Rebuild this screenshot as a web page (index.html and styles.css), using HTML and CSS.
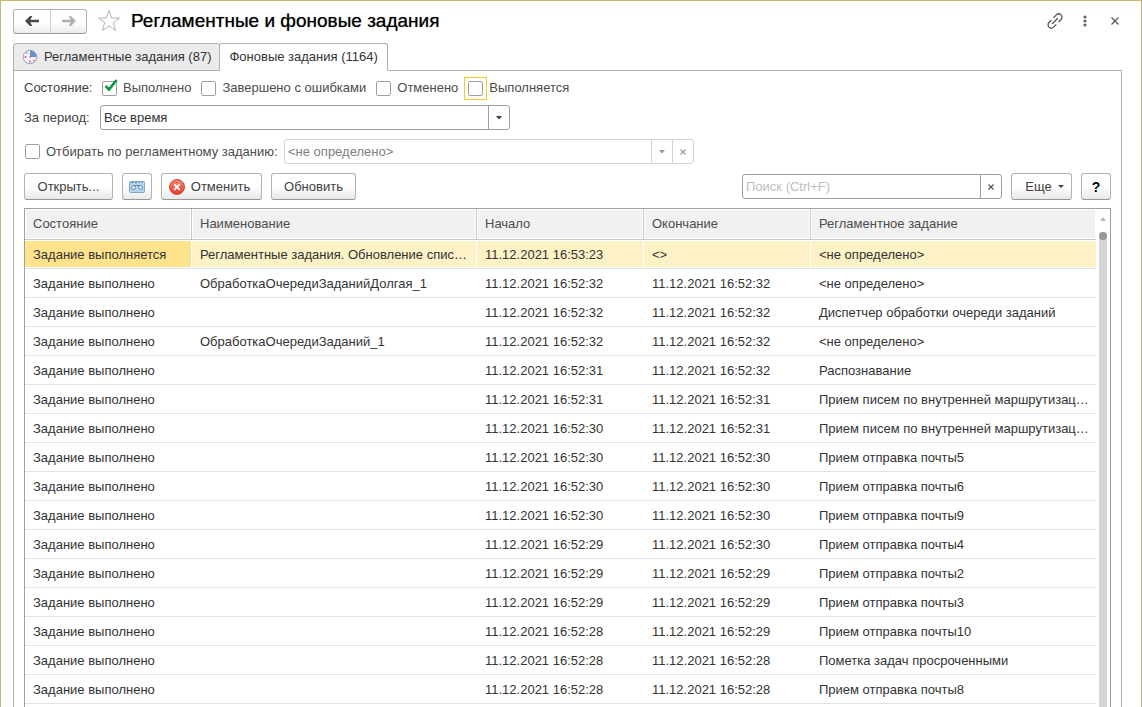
FILE: index.html
```html
<!DOCTYPE html>
<html lang="ru">
<head>
<meta charset="utf-8">
<title>Регламентные и фоновые задания</title>
<link rel="stylesheet" href="styles.css">
</head>
<body>
<main class="window">
  <header class="titlebar">
    <div class="history">
      <button class="history-btn" type="button" aria-label="Назад"><svg width="16" height="12" viewBox="0 0 16 12"><path d="M1 6 6 1h2.300L6.300 4.800H15v2.400H6.300L8.300 11H6z" fill="#484848"/></svg></button>
      <button class="history-btn" type="button" aria-label="Вперед"><svg width="16" height="12" viewBox="0 0 16 12"><path d="M15 6 10 1H7.700l2 3.800H1v2.400h8.700l-2 3.800H10z" fill="#b0b0b0"/></svg></button>
    </div>
    <button class="plain star" type="button" aria-label="В избранное"><svg width="24" height="24" viewBox="0 0 24 24"><path d="M12 1.500 14.700 9H22.500L16.300 13.700 18.600 21.500 12 16.900 5.400 21.500 7.700 13.700 1.500 9H9.300z" fill="none" stroke="#aeb4bb"/></svg></button>
    <h1 class="title">Регламентные и фоновые задания</h1>
    <div class="window-tools">
      <button class="plain" type="button" aria-label="Получить ссылку"><svg width="18" height="18" viewBox="0 0 18 18" fill="none" stroke="#555" stroke-width="1.300"><path d="M6.200 11.800 11.800 6.200M7.500 5.700 10.300 2.900a3.200 3.200 0 0 1 4.700 4.600L12.500 10M5.500 8 3 10.500a3.200 3.200 0 0 0 4.600 4.600L10.300 12.400"/></svg></button>
      <button class="plain" type="button" aria-label="Меню"><svg width="18" height="18" viewBox="0 0 18 18" fill="#666"><circle cx="9" cy="5" r="1.600"/><circle cx="9" cy="9" r="1.600"/><circle cx="9" cy="13" r="1.600"/></svg></button>
      <button class="plain" type="button" aria-label="Закрыть"><svg width="18" height="18" viewBox="0 0 18 18"><path d="M5.500 5.500l7 7M12.500 5.500l-7 7" stroke="#555" stroke-width="1.200"/></svg></button>
    </div>
  </header>

  <nav class="tabs">
    <button class="tab" type="button"><svg width="16" height="16" viewBox="0 0 16 16"><circle cx="8" cy="8" r="6.800" fill="#eef4fc" stroke="#8ea5cf"/><path d="M8 8V1.500a6.500 6.500 0 0 1 6.500 6.500z" fill="#6f8fcb"/><g fill="#e8503c"><circle cx="8" cy="12.500" r=".9"/><circle cx="3.500" cy="8" r=".9"/><circle cx="4.800" cy="4" r=".8"/><circle cx="12" cy="11.500" r=".8"/><circle cx="8" cy="8" r=".8"/></g></svg>Регламентные задания (87)</button>
    <button class="tab tab-active" type="button">Фоновые задания (1164)</button>
  </nav>

  <section class="panel">
    <div class="filters">
      <span class="caption">Состояние:</span>
      <label class="check"><span class="check-frame"><input type="checkbox" checked><svg class="tick" width="16" height="16" viewBox="0 0 16 16"><path d="M2.500 8 6 11.500 13.500 2" fill="none" stroke="#069a4c" stroke-width="2.800"/></svg></span>Выполнено</label>
      <label class="check"><span class="check-frame"><input type="checkbox"></span>Завершено с ошибками</label>
      <label class="check"><span class="check-frame"><input type="checkbox"></span>Отменено</label>
      <label class="check"><span class="check-frame check-focus"><input type="checkbox"></span>Выполняется</label>
    </div>

    <div class="period">
      <label class="caption" for="period">За период:</label>
      <div class="field">
        <select id="period" class="field-input"><option>Все время</option></select>
        <span class="field-btn"><svg width="8" height="4" viewBox="0 0 8 4"><path d="M1 0h6L4 3.500z" fill="#404040"/></svg></span>
      </div>
    </div>

    <div class="job">
      <label class="check job-check"><span class="check-frame"><input type="checkbox"></span>Отбирать по регламентному заданию:</label>
      <div class="field field-off">
        <input class="field-input" type="text" value="&lt;не определено&gt;" aria-label="Регламентное задание" disabled>
        <button class="field-btn" type="button" aria-label="Выбрать" disabled><svg width="8" height="4" viewBox="0 0 8 4"><path d="M1 0h6L4 3.500z" fill="#999"/></svg></button>
        <button class="field-btn" type="button" aria-label="Очистить" disabled><svg width="8" height="8" viewBox="0 0 8 8"><path d="M1.500 1.500l5 5M6.500 1.500l-5 5" stroke="#999" stroke-width="1.200"/></svg></button>
      </div>
    </div>

    <div class="toolbar">
      <button class="btn btn-open" type="button">Открыть...</button>
      <button class="btn btn-icon" type="button" aria-label="Журнал регистрации"><svg width="16" height="12" viewBox="0 0 16 12"><rect x=".5" y=".5" width="15" height="11" rx="1" fill="#b4d6f0" stroke="#86a3bf"/><path d="M2 1.500h2M6 1.500h2M10 1.500h1M13 1.500h1" stroke="#5d7b99"/><path d="M4.500 4.500h7" stroke="#6b87a6"/><circle cx="4.500" cy="6.500" r="2" fill="#e4f0fa" stroke="#6b87a6"/><circle cx="11.500" cy="6.500" r="2" fill="#e4f0fa" stroke="#6b87a6"/></svg></button>
      <button class="btn btn-cancel" type="button"><svg width="16" height="16" viewBox="0 0 16 16"><defs><linearGradient id="red" x2="0" y2="1"><stop stop-color="#f58574"/><stop offset="1" stop-color="#e8392a"/></linearGradient></defs><circle cx="8" cy="8" r="7.500" fill="url(#red)" stroke="#cf4a3a"/><path d="M5.200 5.200l5.600 5.600M10.800 5.200l-5.600 5.600" stroke="#fff" stroke-width="1.900"/></svg>Отменить</button>
      <button class="btn btn-refresh" type="button">Обновить</button>
      <div class="field search">
        <input class="field-input" type="text" placeholder="Поиск (Ctrl+F)" aria-label="Поиск">
        <button class="field-btn" type="button" aria-label="Очистить поиск"><svg width="8" height="8" viewBox="0 0 8 8"><path d="M1.500 1.500l5 5M6.500 1.500l-5 5" stroke="#555" stroke-width="1.200"/></svg></button>
      </div>
      <button class="btn btn-more" type="button">Еще<svg width="6" height="3" viewBox="0 0 6 3"><path d="M0 0h6L3 3z" fill="#404040"/></svg></button>
      <button class="btn btn-icon btn-help" type="button">?</button>
    </div>

    <div class="list">
      <table class="grid">
        <colgroup><col class="col-state"><col class="col-name"><col class="col-time"><col class="col-time"><col></colgroup>
        <thead><tr><th>Состояние</th><th>Наименование</th><th>Начало</th><th>Окончание</th><th>Регламентное задание</th></tr></thead>
        <tbody>
          <tr class="selected"><td>Задание выполняется</td><td>Регламентные задания. Обновление спис…</td><td>11.12.2021 16:53:23</td><td>&lt;&gt;</td><td>&lt;не определено&gt;</td></tr>
          <tr><td>Задание выполнено</td><td>ОбработкаОчередиЗаданийДолгая_1</td><td>11.12.2021 16:52:32</td><td>11.12.2021 16:52:32</td><td>&lt;не определено&gt;</td></tr>
          <tr><td>Задание выполнено</td><td></td><td>11.12.2021 16:52:32</td><td>11.12.2021 16:52:32</td><td>Диспетчер обработки очереди заданий</td></tr>
          <tr><td>Задание выполнено</td><td>ОбработкаОчередиЗаданий_1</td><td>11.12.2021 16:52:32</td><td>11.12.2021 16:52:32</td><td>&lt;не определено&gt;</td></tr>
          <tr><td>Задание выполнено</td><td></td><td>11.12.2021 16:52:31</td><td>11.12.2021 16:52:32</td><td>Распознавание</td></tr>
          <tr><td>Задание выполнено</td><td></td><td>11.12.2021 16:52:31</td><td>11.12.2021 16:52:31</td><td>Прием писем по внутренней маршрутизац…</td></tr>
          <tr><td>Задание выполнено</td><td></td><td>11.12.2021 16:52:30</td><td>11.12.2021 16:52:31</td><td>Прием писем по внутренней маршрутизац…</td></tr>
          <tr><td>Задание выполнено</td><td></td><td>11.12.2021 16:52:30</td><td>11.12.2021 16:52:30</td><td>Прием отправка почты5</td></tr>
          <tr><td>Задание выполнено</td><td></td><td>11.12.2021 16:52:30</td><td>11.12.2021 16:52:30</td><td>Прием отправка почты6</td></tr>
          <tr><td>Задание выполнено</td><td></td><td>11.12.2021 16:52:30</td><td>11.12.2021 16:52:30</td><td>Прием отправка почты9</td></tr>
          <tr><td>Задание выполнено</td><td></td><td>11.12.2021 16:52:29</td><td>11.12.2021 16:52:30</td><td>Прием отправка почты4</td></tr>
          <tr><td>Задание выполнено</td><td></td><td>11.12.2021 16:52:29</td><td>11.12.2021 16:52:29</td><td>Прием отправка почты2</td></tr>
          <tr><td>Задание выполнено</td><td></td><td>11.12.2021 16:52:29</td><td>11.12.2021 16:52:29</td><td>Прием отправка почты3</td></tr>
          <tr><td>Задание выполнено</td><td></td><td>11.12.2021 16:52:28</td><td>11.12.2021 16:52:29</td><td>Прием отправка почты10</td></tr>
          <tr><td>Задание выполнено</td><td></td><td>11.12.2021 16:52:28</td><td>11.12.2021 16:52:28</td><td>Пометка задач просроченными</td></tr>
          <tr><td>Задание выполнено</td><td></td><td>11.12.2021 16:52:28</td><td>11.12.2021 16:52:28</td><td>Прием отправка почты8</td></tr>
        </tbody>
      </table>
      <div class="scroll">
        <svg width="6" height="4" viewBox="0 0 6 4"><path d="M0 4h6L3 0z" fill="#b5b5b5"/></svg>
        <div class="track"><div class="thumb"></div></div>
      </div>
    </div>
  </section>
</main>
</body>
</html>
```
FILE: styles.css
```css
* { box-sizing: border-box; }

body {
  margin: 0;
  background: #fff;
  color: #333;
  font: 13px/16px "Liberation Sans", Arial, sans-serif;
}

button, input, select { font: inherit; color: inherit; margin: 0; }
button { padding: 0; }
svg { display: block; flex: none; }

.window {
  display: flex;
  flex-direction: column;
  height: 100vh;
  overflow: hidden;
  border: 1px solid #c8b76c;
  border-bottom: 0;
  padding: 0 19px 0 12px;
}

.titlebar { display: flex; align-items: center; height: 40px; margin-bottom: 2px; flex: none; }

.history {
  display: flex;
  height: 25px;
  border: 1px solid #b3b3b3;
  border-bottom-color: #999;
  border-radius: 3px;
  background: linear-gradient(#fff 50%, #ececec);
}
.history-btn {
  display: grid;
  place-items: center;
  width: 36px;
  border: 0;
  background: none;
}
.history-btn + .history-btn { border-left: 1px solid #d0d0d0; }

.plain { display: grid; place-items: center; border: 0; background: none; }
.star { margin: 0 10px; }
.title {
  margin: 0;
  font-size: 19px;
  line-height: 24px;
  font-weight: normal;
  color: #000;
  text-shadow: 0 0 1px #0009;
}
.window-tools { display: flex; gap: 12px; margin-left: auto; margin-right: -2px; }

.tabs { display: flex; flex: none; height: 28px; margin-bottom: -1px; z-index: 1; }
.tab {
  display: flex;
  align-items: center;
  gap: 6px;
  padding: 0 8px;
  border: 1px solid #b0b0b0;
  border-radius: 3px 3px 0 0;
  background: #ebebeb;
}
.tab-active {
  margin-left: -1px;
  padding: 0 9px;
  border-bottom-color: #fff;
  background: #fff;
}

.panel {
  display: flex;
  flex-direction: column;
  flex: 1;
  min-height: 0;
  border: 1px solid #b0b0b0;
  border-bottom: 0;
  padding: 5px 10px 0;
}

.caption { color: #404040; }
.filters { display: flex; align-items: center; height: 24px; }
.filters .caption { width: 74px; }
.check { display: flex; align-items: center; gap: 2px; color: #4c4c4c; white-space: nowrap; }
.filters .check { margin-right: 6px; }
.check-frame {
  display: grid;
  place-items: center;
  position: relative;
  width: 23px;
  height: 23px;
  border: 1px solid transparent;
}
.check-focus { border-color: #f8cc20; }
.check input {
  appearance: none;
  width: 15px;
  height: 15px;
  border: 1px solid #a0a0a0;
  border-radius: 2px;
  background: #fff;
}
.tick { position: absolute; left: 4px; top: 0; }

.period { display: flex; align-items: center; margin-top: 5px; }
.period .caption { width: 76px; }

.field {
  display: flex;
  flex: 0 1 410px;
  height: 25px;
  border: 1px solid #a0a0a0;
  border-radius: 3px;
  background: #fff;
}
.field-input {
  appearance: none;
  flex: 1;
  min-width: 0;
  padding: 0 3px;
  border: 0;
  outline: 0;
  background: none;
}
.field-input::placeholder { color: #bdbdbd; opacity: 1; }
.field-btn {
  display: grid;
  place-items: center;
  width: 21px;
  border: 0;
  border-left: 1px solid #a0a0a0;
  background: none;
}
.field-off, .field-off .field-btn { border-color: #d4d4d4; }
.field-off .field-input { color: #808080; }

.job { display: flex; align-items: center; margin-top: 9px; }
.job-check { width: 260px; margin-left: -3px; margin-right: 3px; }

.toolbar { display: flex; align-items: center; gap: 9px; margin: 9px 0 8px; }
.btn {
  display: flex;
  align-items: center;
  justify-content: center;
  height: 27px;
  border: 1px solid #b3b3b3;
  border-bottom-color: #969696;
  border-radius: 3px;
  background: linear-gradient(#fff 50%, #e8e8e8);
  color: #404040;
}
.btn-open { width: 89px; }
.btn-icon { width: 30px; }
.btn-cancel { width: 101px; gap: 6px; padding-right: 4px; }
.btn-refresh { width: 85px; }
.btn-more { width: 61px; gap: 6px; padding-left: 6px; }
.btn-help { font-size: 14px; font-weight: bold; color: #000; }
.search { flex: 0 1 260px; margin-left: auto; }

.list {
  display: flex;
  flex: 1;
  align-items: flex-start;
  min-height: 0;
  overflow: hidden;
  border: 1px solid #a0a0a0;
  border-bottom: 0;
}
.grid { flex: 1; width: 100%; table-layout: fixed; border-collapse: separate; border-spacing: 0; }
.col-state, .col-time { width: 167px; }
.col-name { width: 285px; }
.grid th, .grid td {
  height: 29px;
  padding: 2px 4px 0 8px;
  border-bottom: 1px solid #e3e3e3;
  font-weight: normal;
  text-align: left;
  white-space: nowrap;
  overflow: hidden;
  text-overflow: ellipsis;
}
.grid th {
  height: 31px;
  padding-top: 0;
  border-bottom-color: #c8c8c8;
  border-right: 1px solid #c8c8c8;
  background: #f1f1f1;
  box-shadow: inset 0 0 0 1px #fff;
  color: #4c4c4c;
}
.grid th:last-child { border-right: 0; }
.selected td { background: #fdf1c6; border-right: 1px solid #fff; box-shadow: inset 0 1px #fff, inset 0 -1px #fff; }
.selected td:first-child { background: #fee28c; }
.selected td:last-child { border-right: 0; }

.scroll {
  display: flex;
  flex-direction: column;
  align-items: center;
  align-self: stretch;
  gap: 11px;
  flex: none;
  width: 14px;
  padding-top: 8px;
}
.track { flex: 1; width: 8px; background: #d5d5d5; border-radius: 4px 4px 0 0; }
.thumb { width: 8px; height: 8px; border-radius: 50%; background: #999; }
```
